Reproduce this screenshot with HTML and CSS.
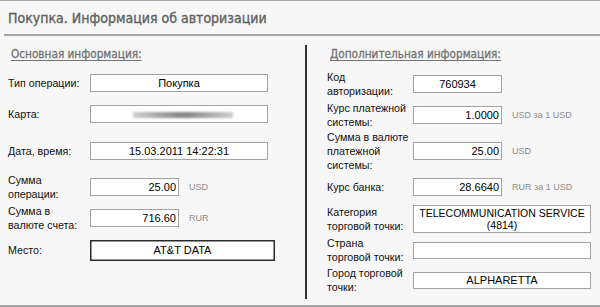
FILE: index.html
```html
<!DOCTYPE html>
<html lang="ru">
<head>
<meta charset="utf-8">
<title>Покупка. Информация об авторизации</title>
<link rel="stylesheet" href="styles.css">
</head>
<body>
<div class="panel">
  <div class="header">
    <h1 class="title">Покупка. Информация об авторизации</h1>
  </div>
  <div class="columns">
    <section class="col col-main">
      <h2 class="section-title">Основная информация:</h2>
      <div class="fields fields-main">
        <div class="label">Тип операции:</div>
        <div class="value"><div class="box box-wide center">Покупка</div></div>

        <div class="label">Карта:</div>
        <div class="value"><div class="box box-wide center"><span class="masked"></span></div></div>

        <div class="label">Дата, время:</div>
        <div class="value"><div class="box box-wide center">15.03.2011 14:22:31</div></div>

        <div class="label">Сумма<br>операции:</div>
        <div class="value"><div class="box box-num">25.00</div><span class="unit">USD</span></div>

        <div class="label">Сумма в<br>валюте счета:</div>
        <div class="value"><div class="box box-num">716.60</div><span class="unit">RUR</span></div>

        <div class="label">Место:</div>
        <div class="value"><div class="box box-place center">AT&amp;T DATA</div></div>
      </div>
    </section>
    <div class="divider"></div>
    <section class="col col-extra">
      <h2 class="section-title">Дополнительная информация:</h2>
      <div class="fields fields-extra">
        <div class="label">Код<br>авторизации:</div>
        <div class="value"><div class="box box-num center">760934</div></div>

        <div class="label">Курс платежной<br>системы:</div>
        <div class="value"><div class="box box-num">1.0000</div><span class="unit">USD за 1 USD</span></div>

        <div class="label">Сумма в валюте<br>платежной<br>системы:</div>
        <div class="value"><div class="box box-num">25.00</div><span class="unit">USD</span></div>

        <div class="label">Курс банка:</div>
        <div class="value"><div class="box box-num">28.6640</div><span class="unit">RUR за 1 USD</span></div>

        <div class="label">Категория<br>торговой точки:</div>
        <div class="value"><div class="box box-wide box-multi center">TELECOMMUNICATION SERVICE (4814)</div></div>

        <div class="label">Страна<br>торговой точки:</div>
        <div class="value"><div class="box box-wide box-short center"></div></div>

        <div class="label">Город торговой<br>точки:</div>
        <div class="value"><div class="box box-wide box-short center">ALPHARETTA</div></div>
      </div>
    </section>
  </div>
</div>
</body>
</html>
```
FILE: styles.css
```css
* { box-sizing: border-box; }

html, body {
  margin: 0;
  padding: 0;
  background: #f7f7f7;
}

.panel {
  width: 600px;
  height: 307px;
  border-top: 1px solid #a9a9a9;
  border-bottom: 2px solid #a3a3a3;
  display: flex;
  flex-direction: column;
  font-family: "Liberation Sans", Arial, sans-serif;
}

.header {
  margin-left: 4px;
  border-bottom: 2px solid #a6a6a6;
  height: 35px;
  padding-left: 4px;
  display: flex;
  align-items: center;
}

.title {
  margin: 0;
  font-family: "DejaVu Sans Condensed", "DejaVu Sans", sans-serif;
  font-size: 14px;
  font-weight: normal;
  color: #616161;
  -webkit-text-stroke: 0.35px #616161;
}

.columns {
  flex: 1;
  display: flex;
}

.col-main { width: 305px; padding-left: 8px; }
.col-extra { flex: 1; padding-left: 20px; }

.divider {
  width: 2px;
  background: #333;
  margin: 9px 0 6px;
}

.section-title {
  margin: 10px 0 6px;
  padding-left: 3px;
  height: 16px;
  line-height: 16px;
  font-family: "DejaVu Sans Condensed", "DejaVu Sans", sans-serif;
  font-size: 11.7px;
  font-weight: normal;
  color: #737373;
  -webkit-text-stroke: 0.3px #737373;
  text-decoration: underline;
  text-underline-offset: 2px;
}

.fields {
  display: grid;
  align-items: center;
}

.fields-main {
  grid-template-columns: 82px auto;
  grid-template-rows: 30px 32px 42px 30px 32px 32px;
}

.fields-extra {
  grid-template-columns: 86px auto;
  grid-template-rows: 32px 29px 44px 28px 36px 26px 34px;
}

.label {
  font-size: 10.7px;
  line-height: 14px;
  color: #111;
}

.value {
  display: flex;
  align-items: center;
}

.box {
  height: 18px;
  line-height: 16px;
  background: #fff;
  border: 1px solid #a3a3a3;
  font-size: 11px;
  color: #000;
  white-space: nowrap;
  overflow: hidden;
}

.center { text-align: center; }

.box-wide { width: 178px; }
.box-num {
  width: 89px;
  text-align: right;
  padding-right: 2px;
}
.box-num.center { text-align: center; padding-right: 0; }

.box-place {
  width: 185px;
  height: 21px;
  line-height: 18px;
  border: 1px solid #2b2b2b;
  box-shadow: inset 0 0 0 0.5px #2b2b2b;
}

.box-multi {
  height: 28px;
  line-height: 12px;
  padding-top: 1px;
  white-space: normal;
  font-size: 10.5px;
}

.box-short { height: 17px; line-height: 15px; }

.unit {
  margin-left: 10px;
  font-size: 9px;
  color: #8c8c8c;
}

.masked {
  display: inline-block;
  width: 100px;
  height: 6px;
  margin-left: 7px;
  vertical-align: middle;
  background: linear-gradient(to right, #cfcfcf, #8a8a8a 45%, #8a8a8a 55%, #cfcfcf);
  filter: blur(1.2px);
}
```
